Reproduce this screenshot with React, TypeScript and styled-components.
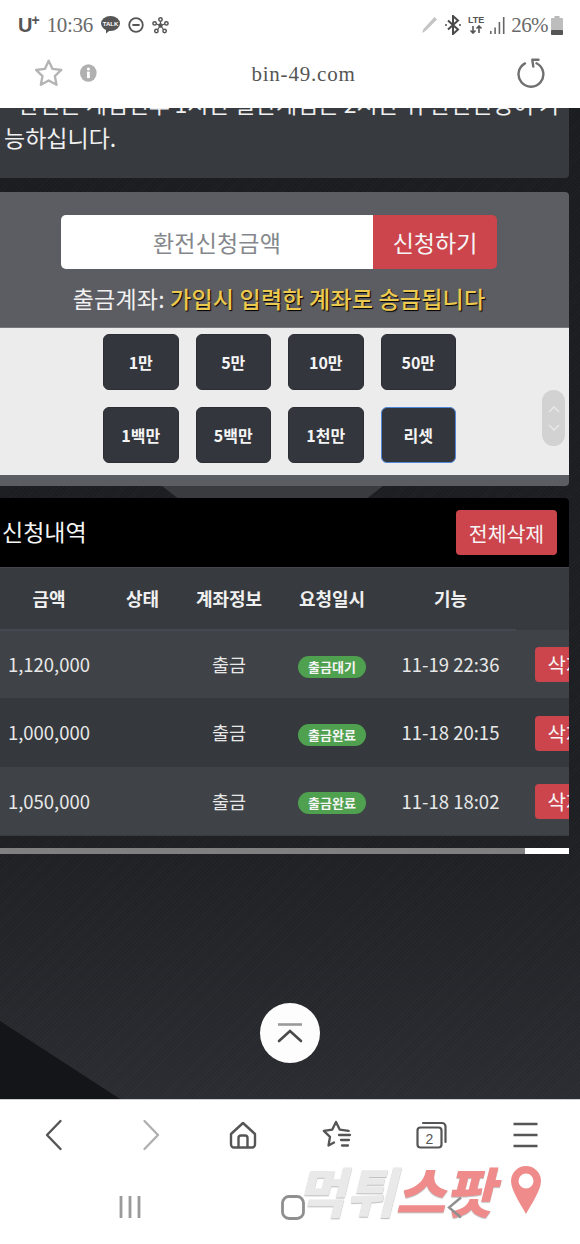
import React from 'react'
import styled, { createGlobalStyle } from 'styled-components'

const GlobalStyle = createGlobalStyle`
  html, body { margin: 0; padding: 0; background: #fff; }
  * { box-sizing: border-box; }
  body { font-family: "Noto Sans CJK KR", "Noto Sans", sans-serif; }
`

const Screen = styled.div`
  width: 580px;
  height: 1244px;
  display: flex;
  flex-direction: column;
  overflow: hidden;
  position: relative;
`

const TopChrome = styled.header`
  height: 108px;
  flex: none;
  background: #fff;
  position: relative;
  z-index: 2;
`

const StatusBar = styled.div`
  height: 48px;
  padding: 2px 17px 0 18px;
  display: flex;
  align-items: center;
  justify-content: space-between;
`

const StatusGroup = styled.div<{ $gap: number }>`
  display: flex;
  align-items: center;
  gap: ${p => p.$gap}px;
`

const Carrier = styled.span`
  font: 700 20px "Liberation Sans", sans-serif;
  color: #555;
  letter-spacing: -1px;
  sup { font-size: 14px; line-height: 0; position: relative; top: -1px; vertical-align: 6px; }
`

const StatusText = styled.span`
  font: 400 21px "Liberation Serif", serif;
  color: #6a6a6a;
  letter-spacing: -0.3px;
`

const Percent = styled(StatusText)`
  letter-spacing: -0.6px;
  margin-right: -3px;
`

const LteMark = styled.span`
  display: flex;
  flex-direction: column;
  align-items: center;
  font: 700 9px/9px "Liberation Sans", sans-serif;
  color: #555;
  svg { display: block; }
`

const AddressBar = styled.div`
  height: 50px;
  display: flex;
  align-items: center;
`

const AddressLeft = styled.div`
  width: 97px;
  padding-left: 34px;
  display: flex;
  align-items: center;
  gap: 17px;
`

const Url = styled.div`
  flex: 1;
  padding-top: 3px;
  text-align: center;
  font: 400 21px "Liberation Serif", serif;
  letter-spacing: 0.8px;
  color: #555;
`

const AddressRight = styled.div`
  width: 70px;
  padding-right: 34px;
  display: flex;
  justify-content: flex-end;
`

const Main = styled.main`
  flex: 1;
  position: relative;
  overflow: hidden;
  background-color: #25262b;
  background-image:
    repeating-linear-gradient(135deg, rgba(255, 255, 255, 0.018) 0 1px, transparent 1px 3px),
    linear-gradient(180deg, #1b1c20 0%, #1e1f23 72%, #2b2c31 100%);

  &::before {
    content: "";
    position: absolute;
    left: 0;
    bottom: 0;
    width: 120px;
    height: 78px;
    background: #141519;
    clip-path: polygon(0 0, 100% 100%, 0 100%);
  }

  &::after {
    content: "";
    position: absolute;
    left: 162px;
    top: 378px;
    width: 221px;
    height: 12px;
    background: #3a3b3f;
    clip-path: polygon(0 0, 100% 0, 93% 100%, 7% 100%);
  }
`

const Column = styled.div`
  position: relative;
  z-index: 1;
  width: 569px;
  display: flex;
  flex-direction: column;
`

const Notice = styled.section`
  height: 70px;
  background: #373b40;
  border-radius: 0 0 4px 0;
  overflow: hidden;
  color: #f0f0f0;
  font-size: 23px;
  line-height: 34px;
`

const NoticeText = styled.p`
  margin: -22px 0 0 0;
  padding-left: 4px;
  white-space: nowrap;
`

const NoticeLead = styled.span`
  padding-left: 14px;
  letter-spacing: -0.2px;
`

const FormPanel = styled.section`
  margin-top: 14px;
  height: 294px;
  padding-top: 23px;
  background: #5c5d63;
  border-radius: 0 4px 4px 0;
`

const AmountRow = styled.div`
  margin-left: 61px;
  width: 436px;
  height: 54px;
  display: flex;
`

const AmountInput = styled.div`
  flex: 1;
  background: #fff;
  border-radius: 5px 0 0 5px;
  color: #84878b;
  font-size: 23px;
  letter-spacing: 0.2px;
  display: flex;
  align-items: center;
  justify-content: center;
`

const AmountButton = styled.div`
  width: 124px;
  background: #cc444c;
  border-radius: 0 5px 5px 0;
  color: #f5f5f5;
  font-size: 23px;
  display: flex;
  align-items: center;
  justify-content: center;
`

const Caption = styled.div`
  height: 58px;
  padding-right: 11px;
  display: flex;
  align-items: center;
  justify-content: center;
  font-size: 23px;
  letter-spacing: 0.2px;
  color: #f0f0f0;
  white-space: pre;
`

const CaptionNote = styled.span`
  color: #ecc94f;
  font-weight: 500;
  text-shadow: 1px 1px 1px #000;
`

const AmountArea = styled.div`
  position: relative;
  height: 148px;
  background: #ececec;
  border-top: 1px solid #77787c;
  padding: 6px 0 0 103px;
  display: grid;
  grid-template-columns: repeat(4, 75.5px);
  grid-auto-rows: 56px;
  column-gap: 17px;
  row-gap: 17px;
`

const ChipButton = styled.div<{ $focused?: boolean }>`
  background: #33363d;
  border: 1px solid ${p => (p.$focused ? '#4f86d9' : '#2c2e34')};
  border-radius: 6px;
  color: #f4f4f4;
  font-size: 16px;
  font-weight: 700;
  display: flex;
  align-items: center;
  justify-content: center;
`

const ScrollPill = styled.div`
  position: absolute;
  left: 542px;
  top: 62px;
  width: 23px;
  height: 56px;
  border-radius: 12px;
  background: #d2d2d2;
  display: flex;
  flex-direction: column;
  align-items: center;
  justify-content: center;
  gap: 9px;
`

const HistoryPanel = styled.section`
  margin-top: 12px;
  height: 338px;
  border-radius: 0 4px 0 0;
  overflow: hidden;
  background: #373b40;
`

const HistoryHeader = styled.div`
  height: 69px;
  background: #000;
  padding: 0 12px 0 2px;
  display: flex;
  align-items: center;
  justify-content: space-between;
`

const HistoryTitle = styled.h2`
  margin: 0;
  padding-bottom: 3px;
  font-size: 23px;
  font-weight: 400;
  color: #f5f5f5;
`

const ClearButton = styled.div`
  width: 101px;
  height: 45px;
  border-radius: 4px;
  background: #cc444c;
  color: #f5f5f5;
  font-size: 20.5px;
  display: flex;
  align-items: center;
  justify-content: center;
`

const Table = styled.table`
  width: 600px;
  margin-left: -2px;
  table-layout: fixed;
  border-collapse: collapse;
  color: #e8e8e8;
  font-size: 18.5px;
`

const HeadCell = styled.th<{ $plain?: boolean; $inset?: boolean }>`
  height: 62px;
  padding: 0 ${p => (p.$inset ? '6px' : '0')} 0 0;
  font-size: 18px;
  font-weight: 700;
  color: #f0f0f0;
  text-align: center;
  border-top: 1px solid #43464c;
  border-bottom: ${p => (p.$plain ? 'none' : '2px solid #454851')};
`

const Row = styled.tr<{ $odd: boolean }>`
  height: 68.5px;
  background: ${p => (p.$odd ? '#3f4347' : '#35383d')};
`

const Cell = styled.td<{ $inset?: boolean }>`
  padding: 0 ${p => (p.$inset ? '6px' : '0')} 0 0;
  text-align: center;
  white-space: nowrap;
`

const StateBadge = styled.span`
  display: inline-block;
  vertical-align: middle;
  width: 68px;
  height: 22px;
  border-radius: 11px;
  background: #4fa04f;
  color: #f5f5f5;
  font-size: 13px;
  font-weight: 700;
  line-height: 22px;
`

const DeleteCell = styled.td`
  padding: 2px 0 0 19px;
`

const DeleteButton = styled.div`
  width: 62px;
  height: 35px;
  border-radius: 4px;
  background: #cc444c;
  color: #f5f5f5;
  font-size: 20px;
  line-height: 35px;
  text-align: center;
  white-space: nowrap;
`

const ScrollTrack = styled.div`
  margin-top: 12px;
  height: 6px;
  background: #808080;
  display: flex;
  justify-content: flex-end;
`

const ScrollThumb = styled.div`
  width: 44px;
  background: #fff;
`

const TopButton = styled.div`
  position: absolute;
  z-index: 1;
  left: 260px;
  top: 895px;
  width: 60px;
  height: 60px;
  border-radius: 50%;
  background: #fdfdfd;
  display: flex;
  align-items: center;
  justify-content: center;
`

const BottomChrome = styled.footer`
  height: 145px;
  flex: none;
  background: #fff;
  border-top: 1px solid #cfcfcf;
  position: relative;
`

const NavRow = styled.nav`
  height: 70px;
  padding: 0 34px;
  display: flex;
  align-items: center;
  justify-content: space-between;
`

const NavIcon = styled.div`
  width: 40px;
  display: flex;
  justify-content: center;
`

const SystemRow = styled.div`
  position: relative;
  z-index: 1;
  height: 74px;
  padding: 0 105px 0 110px;
  display: flex;
  align-items: center;
  justify-content: space-between;
`

const Watermark = styled.div`
  position: absolute;
  left: 296px;
  top: 60px;
  display: flex;
  align-items: center;
  gap: 16px;
  pointer-events: none;
`

const MarkText = styled.span`
  font-size: 54px;
  line-height: 60px;
  font-weight: 900;
  font-style: italic;
  white-space: nowrap;
  color: #e9e9e9;
  text-shadow: 0 1px 1px #bbb;
`

const MarkRed = styled.span`
  color: #f08b8b;
`

const StarOutline = () => (
  <svg width="30" height="30" viewBox="0 0 30 30" fill="none" stroke="#b4b4b4" strokeWidth="2.4" strokeLinejoin="round">
    <path d="M15 2.500l3.900 8.300 9 1.100-6.600 6.200 1.700 9L15 22.600l-8 4.500 1.700-9-6.600-6.200 9-1.100z" />
  </svg>
)

const InfoIcon = () => (
  <svg width="17" height="18" viewBox="0 0 17 18">
    <ellipse cx="8.500" cy="9" rx="8.500" ry="9" fill="#b0b0b0" />
    <rect x="7.200" y="7.600" width="2.800" height="6.600" fill="#fff" />
    <circle cx="8.600" cy="4.900" r="1.600" fill="#fff" />
  </svg>
)

const ReloadIcon = () => (
  <svg width="29" height="30" viewBox="0 0 29 30" fill="none" stroke="#707070" strokeWidth="2.4" strokeLinecap="round" strokeLinejoin="round">
    <path d="M19.500 5.200A12.400 12.400 0 1 1 8 5.400" />
    <path d="M21.500 1.800h-6.200l1 6.800" />
  </svg>
)

const TalkIcon = () => (
  <svg width="19" height="18" viewBox="0 0 19 18">
    <ellipse cx="9.500" cy="7.500" rx="9.500" ry="7.500" fill="#555" />
    <path d="M5 12l0 5.500 5-4z" fill="#555" />
    <text x="9.500" y="9.600" textAnchor="middle" fontSize="6" fontWeight="700" fontFamily="Liberation Sans" fill="#fff">TALK</text>
  </svg>
)

const DndIcon = () => (
  <svg width="16" height="16" viewBox="0 0 16 16" fill="none" stroke="#555" strokeWidth="1.800">
    <circle cx="8" cy="8" r="6.800" />
    <path d="M4.400 8h7.200" strokeWidth="2" />
  </svg>
)

const NodesIcon = () => (
  <svg width="17" height="17" viewBox="0 0 17 17" fill="none" stroke="#555" strokeWidth="1.500">
    <path d="M8.500 8.500V3M8.500 8.500L3 6.500M8.500 8.500l5.500-2M8.500 8.500l-4 5.500M8.500 8.500l4 5.500" strokeWidth="1.200" />
    <circle cx="8.500" cy="8.500" r="1.500" fill="#555" />
    <circle cx="8.500" cy="2.500" r="1.700" fill="#fff" />
    <circle cx="2.600" cy="6.400" r="1.700" fill="#fff" />
    <circle cx="14.400" cy="6.400" r="1.700" fill="#fff" />
    <circle cx="4.400" cy="14" r="1.700" fill="#fff" />
    <circle cx="12.600" cy="14" r="1.700" fill="#fff" />
  </svg>
)

const PenIcon = () => (
  <svg width="17" height="18" viewBox="0 0 17 18">
    <path d="M13.500 1l2.500 2.500L4.500 15 1 17l1.500-4z" fill="#c4c4c4" />
  </svg>
)

const BluetoothIcon = () => (
  <svg width="18" height="20" viewBox="0 0 18 20" fill="none" stroke="#4a4a4a" strokeWidth="2">
    <path d="M4 5.500l10 9L9 19V1l5 4.500-10 9" />
    <circle cx="2" cy="10" r="1" fill="#4a4a4a" stroke="none" />
    <circle cx="16" cy="10" r="1" fill="#4a4a4a" stroke="none" />
  </svg>
)

const LteArrows = () => (
  <svg width="14" height="9" viewBox="0 0 14 9" fill="none" stroke="#555" strokeWidth="1.600">
    <path d="M4 1v7M1.500 5.500L4 8l2.500-2.500M10 8V1M7.500 3.500L10 1l2.500 2.500" />
  </svg>
)

const SignalIcon = () => (
  <svg width="15" height="18" viewBox="0 0 15 18" fill="#666">
    <rect x="0" y="15" width="1.600" height="3" />
    <rect x="4.300" y="11.500" width="1.600" height="6.500" />
    <rect x="8.600" y="6" width="1.600" height="12" />
    <rect x="12.900" y="1" width="1.600" height="17" />
  </svg>
)

const BatteryIcon = () => (
  <svg width="12" height="19" viewBox="0 0 12 19">
    <rect x="3.500" y="0" width="5" height="2" fill="#b8b8b8" />
    <rect x="0" y="2" width="12" height="17" rx="1" fill="#bdbdbd" />
    <rect x="0" y="14" width="12" height="5" rx="1" fill="#555" />
  </svg>
)

const UpChevron = () => (
  <svg width="14" height="9" viewBox="0 0 14 9" fill="none" stroke="#e6e6e6" strokeWidth="1.600">
    <path d="M2 7l5-5 5 5" />
  </svg>
)

const DownChevron = () => (
  <svg width="14" height="9" viewBox="0 0 14 9" fill="none" stroke="#e6e6e6" strokeWidth="1.600">
    <path d="M2 2l5 5 5-5" />
  </svg>
)

const TopArrow = () => (
  <svg width="26" height="20" viewBox="0 0 26 20" fill="none" strokeWidth="2.600">
    <path d="M1 1.500h24" stroke="#9a9a9a" />
    <path d="M2 18L13 8l11 10" stroke="#4a4a4a" strokeLinecap="round" />
  </svg>
)

const BackIcon = () => (
  <svg width="18" height="32" viewBox="0 0 18 32" fill="none" stroke="#555" strokeWidth="2.400" strokeLinecap="round" strokeLinejoin="round">
    <path d="M15.500 2L2 16l13.500 14" />
  </svg>
)

const ForwardIcon = () => (
  <svg width="24" height="32" viewBox="-6 0 24 32" fill="none" stroke="#b0b0b0" strokeWidth="2.400" strokeLinecap="round" strokeLinejoin="round">
    <path d="M2.500 2L16 16 2.500 30" />
  </svg>
)

const HomeIcon = () => (
  <svg width="28" height="28" viewBox="0 0 28 28" fill="none" stroke="#555" strokeWidth="2.400" strokeLinejoin="round">
    <path d="M14 2L2 13v10.500a3 3 0 0 0 3 3h18a3 3 0 0 0 3-3V13z" />
    <path d="M9.500 26.500V17a2.500 2.500 0 0 1 2.500-2.500h4a2.500 2.500 0 0 1 2.500 2.500v9.500" />
  </svg>
)

const BookmarkIcon = () => (
  <svg width="30" height="30" viewBox="0 0 30 30" fill="none" stroke="#555" strokeWidth="2.300" strokeLinejoin="round" strokeLinecap="round">
    <path d="M14 2l3.700 7.600 9 1.200M14 2l-3.700 7.600-8.500 1.200 6.200 6-1.500 8.700 5.500-3" />
    <path d="M17 15h11M19 20h8M20 25.500h6" />
  </svg>
)

const TabsIcon = () => (
  <svg width="31" height="28" viewBox="0 0 31 28" fill="none" stroke="#555" strokeWidth="2.200" strokeLinejoin="round">
    <rect x="1.500" y="6.500" width="24" height="20" rx="3" />
    <path d="M7 2h19a3.500 3.500 0 0 1 3.500 3.500V21" strokeLinecap="round" />
    <text x="13.500" y="22.500" textAnchor="middle" fontSize="14" fontFamily="Liberation Sans" fill="#555" stroke="none">2</text>
  </svg>
)

const MenuIcon = () => (
  <svg width="25" height="26" viewBox="0 0 25 26" fill="none" stroke="#555" strokeWidth="2.400">
    <path d="M0.500 2h24M0.500 13h24M0.500 24h24" />
  </svg>
)

const RecentsIcon = () => (
  <svg width="22" height="24" viewBox="0 0 22 24" fill="none" stroke="#9a9a9a" strokeWidth="2.800">
    <path d="M2 1v22M11 1v22M20 1v22" />
  </svg>
)

const HomeSquareIcon = () => (
  <svg width="24" height="25" viewBox="0 0 24 25" fill="none" stroke="#8f8f8f" strokeWidth="2.800">
    <rect x="1.500" y="1.500" width="21" height="22" rx="6.500" />
  </svg>
)

const SystemBackIcon = () => (
  <svg width="16" height="23" viewBox="0 0 16 23" fill="none" stroke="#8f8f8f" strokeWidth="2.400">
    <path d="M14 1.500L2 11.500l12 10" />
  </svg>
)

const PinIcon = () => (
  <svg width="30" height="48" viewBox="0 0 30 48">
    <path fillRule="evenodd" fill="#f08b8b" d="M15 0a15 15 0 0 1 15 15c0 9-10 24-15 33C10 39 0 24 0 15A15 15 0 0 1 15 0zm0 7.500a7.500 7.500 0 1 0 0 15 7.500 7.500 0 0 0 0-15z" />
  </svg>
)

const chips = ['1만', '5만', '10만', '50만', '1백만', '5백만', '1천만', '리셋']

const rows = [
  { amount: '1,120,000', state: '출금대기', date: '11-19 22:36' },
  { amount: '1,000,000', state: '출금완료', date: '11-18 20:15' },
  { amount: '1,050,000', state: '출금완료', date: '11-18 18:02' },
]

const App = () => {
  return (
    <Screen>
      <GlobalStyle />
      <TopChrome>
        <StatusBar>
          <StatusGroup $gap={8}>
            <Carrier>U<sup>+</sup></Carrier>
            <StatusText>10:36</StatusText>
            <TalkIcon />
            <DndIcon />
            <NodesIcon />
          </StatusGroup>
          <StatusGroup $gap={6}>
            <PenIcon />
            <BluetoothIcon />
            <LteMark>LTE<LteArrows /></LteMark>
            <SignalIcon />
            <Percent>26%</Percent>
            <BatteryIcon />
          </StatusGroup>
        </StatusBar>
        <AddressBar>
          <AddressLeft>
            <StarOutline />
            <InfoIcon />
          </AddressLeft>
          <Url>bin-49.com</Url>
          <AddressRight>
            <ReloadIcon />
          </AddressRight>
        </AddressBar>
      </TopChrome>

      <Main>
        <Column>
          <Notice>
            <NoticeText>
              <NoticeLead>환전은 게임전후 1시간 일반게임은 2시간 뒤 환전신청이 가</NoticeLead>
              <br />
              능하십니다.
            </NoticeText>
          </Notice>

          <FormPanel>
            <AmountRow>
              <AmountInput>환전신청금액</AmountInput>
              <AmountButton>신청하기</AmountButton>
            </AmountRow>
            <Caption>
              출금계좌: <CaptionNote>가입시 입력한 계좌로 송금됩니다</CaptionNote>
            </Caption>
            <AmountArea>
              {chips.map(chip => (
                <ChipButton key={chip} $focused={chip === '리셋'}>{chip}</ChipButton>
              ))}
              <ScrollPill>
                <UpChevron />
                <DownChevron />
              </ScrollPill>
            </AmountArea>
          </FormPanel>

          <HistoryPanel>
            <HistoryHeader>
              <HistoryTitle>신청내역</HistoryTitle>
              <ClearButton>전체삭제</ClearButton>
            </HistoryHeader>
            <Table>
              <colgroup>
                <col width="102" />
                <col width="85" />
                <col width="88" />
                <col width="118" />
                <col width="125" />
                <col width="82" />
              </colgroup>
              <thead>
                <tr>
                  <HeadCell>금액</HeadCell>
                  <HeadCell>상태</HeadCell>
                  <HeadCell>계좌정보</HeadCell>
                  <HeadCell>요청일시</HeadCell>
                  <HeadCell $inset>기능</HeadCell>
                  <HeadCell $plain />
                </tr>
              </thead>
              <tbody>
                {rows.map((row, i) => (
                  <Row key={row.date} $odd={i % 2 === 0}>
                    <Cell>{row.amount}</Cell>
                    <Cell />
                    <Cell>출금</Cell>
                    <Cell><StateBadge>{row.state}</StateBadge></Cell>
                    <Cell $inset>{row.date}</Cell>
                    <DeleteCell><DeleteButton>삭제</DeleteButton></DeleteCell>
                  </Row>
                ))}
              </tbody>
            </Table>
          </HistoryPanel>

          <ScrollTrack>
            <ScrollThumb />
          </ScrollTrack>
        </Column>

        <TopButton>
          <TopArrow />
        </TopButton>
      </Main>

      <BottomChrome>
        <NavRow>
          <NavIcon><BackIcon /></NavIcon>
          <NavIcon><ForwardIcon /></NavIcon>
          <NavIcon><HomeIcon /></NavIcon>
          <NavIcon><BookmarkIcon /></NavIcon>
          <NavIcon><TabsIcon /></NavIcon>
          <NavIcon><MenuIcon /></NavIcon>
        </NavRow>
        <SystemRow>
          <NavIcon><RecentsIcon /></NavIcon>
          <NavIcon><HomeSquareIcon /></NavIcon>
          <NavIcon><SystemBackIcon /></NavIcon>
        </SystemRow>
        <Watermark>
          <MarkText>먹튀<MarkRed>스팟</MarkRed></MarkText>
          <PinIcon />
        </Watermark>
      </BottomChrome>
    </Screen>
  )
}

export default App
